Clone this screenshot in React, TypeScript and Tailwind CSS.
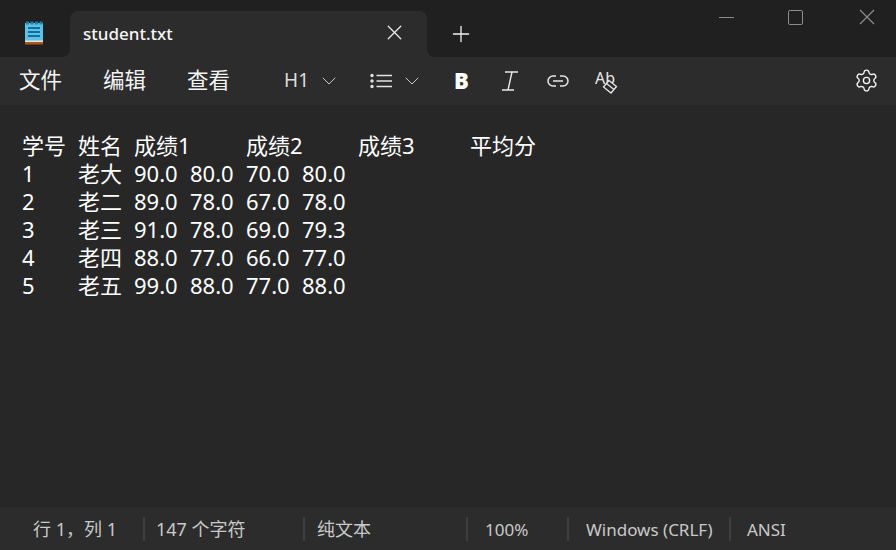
import { ChevronDown, Plus, Settings, X } from "lucide-react";

const fontStack = "font-['Noto_Sans','Noto_Sans_CJK_SC',sans-serif]";
const rows = [
  ["1", "老大", "90.0", "80.0", "70.0", "80.0"],
  ["2", "老二", "89.0", "78.0", "67.0", "78.0"],
  ["3", "老三", "91.0", "78.0", "69.0", "79.3"],
  ["4", "老四", "88.0", "77.0", "66.0", "77.0"],
  ["5", "老五", "99.0", "88.0", "77.0", "88.0"],
];

function NotepadIcon() {
  return (
    <svg width="18" height="24" viewBox="0 0 18 24" className="shrink-0">
      <rect x="0" y="2" width="18" height="19" fill="#5cc3e6" />
      <rect x="0" y="19.5" width="18" height="1.5" fill="#e8e4dc" />
      <rect x="0" y="21" width="18" height="2.5" fill="#b0541c" />
      <rect x="1" y="0.5" width="3" height="3" fill="#1f7fa8" />
      <rect x="5.5" y="0.5" width="3" height="3" fill="#1f7fa8" />
      <rect x="10" y="0.5" width="3" height="3" fill="#1f7fa8" />
      <rect x="14.5" y="0.5" width="3" height="3" fill="#1f7fa8" />
      <rect x="3" y="6" width="12" height="2" fill="#11719c" />
      <rect x="3" y="10" width="12" height="2" fill="#11719c" />
      <rect x="3" y="14" width="12" height="2" fill="#11719c" />
    </svg>
  );
}

function ListIcon() {
  return (
    <svg width="23" height="16" viewBox="0 0 23 16" fill="none" stroke="#e4e4e4" strokeWidth="1.4">
      <circle cx="2" cy="2.5" r="1" fill="#e4e4e4" />
      <circle cx="2" cy="8" r="1" fill="#e4e4e4" />
      <circle cx="2" cy="13.5" r="1" fill="#e4e4e4" />
      <path d="M6.5 2.5H22M6.5 8H22M6.5 13.5H22" />
    </svg>
  );
}

function ItalicIcon() {
  return (
    <svg width="18" height="20" viewBox="0 0 18 20" fill="none" stroke="#e8e8e8" strokeWidth="1.4">
      <path d="M4 1H17M1 19H13M11 1L7 19" />
    </svg>
  );
}

function LinkIcon() {
  return (
    <svg width="22" height="14" viewBox="0 0 22 14" fill="none" stroke="#e8e8e8" strokeWidth="1.5">
      <path d="M9 2H6a5 5 0 0 0 0 10h3M13 2h3a5 5 0 0 1 0 10h-3M6 7h10" />
    </svg>
  );
}

function ClearFormatIcon() {
  return (
    <svg width="24" height="30" viewBox="0 -6 24 30" fill="none" className="block">
      <text x="0" y="12" fontSize="16" fill="#e8e8e8" fontFamily="Noto Sans, sans-serif">Ab</text>
      <path d="M14 8.5L21.5 14.5L16 21L8.5 15Z M11.5 11.5L19 17.5" stroke="#e8e8e8" strokeWidth="1.3" fill="#2c2c2c" />
    </svg>
  );
}

function StatusCell({ width, pad, textSize, text }: { width: string; pad: string; textSize: string; text: string }) {
  return (
    <div className={`flex h-full items-center ${width}`}>
      <div className={`h-[24px] w-[2px] bg-[#3e3e3e] ${pad}`} />
      <span className={`mt-[2px] whitespace-nowrap ${textSize}`}>{text}</span>
    </div>
  );
}

function Row({ cells }: { cells: string[] }) {
  return (
    <div className="grid h-[28px] grid-cols-[repeat(10,56px)] items-center">
      {cells.map((cell, i) => (
        <span key={i} className="whitespace-nowrap">
          {cell}
        </span>
      ))}
    </div>
  );
}

export default function App() {
  return (
    <div className={`flex h-[550px] w-[896px] flex-col overflow-hidden bg-[#272727] text-white ${fontStack}`}>
      <header className="flex h-[57px] shrink-0 bg-[#2c2c2c]">
        <div className="flex w-[70px] items-center rounded-br-lg bg-[#202020] pl-[25px] pt-[9px]">
          <NotepadIcon />
        </div>
        <div className="bg-[#202020] pt-[11px]">
          <div className="flex h-[46px] w-[357px] items-center rounded-t-lg bg-[#2c2c2c] pl-[13px]">
            <span className="text-[17px] font-medium text-[#f6f6f6]">student.txt</span>
            <X className="ml-auto mb-[3px] mr-[20px] text-[#ededed]" size={25} strokeWidth={1.2} />
          </div>
        </div>
        <div className="relative flex flex-1 rounded-bl-lg bg-[#202020]">
          <Plus className="ml-[21px] mt-[21px] text-[#f2f2f2]" size={26} strokeWidth={1.2} />
          <div className="ml-auto flex h-[36px] text-[#8c8c8c]">
            <div className="mr-[54px] mt-[17px] h-[1px] w-[15px] bg-[#8c8c8c]" />
            <div className="mr-[56px] mt-[10px] h-[15px] w-[15px] rounded-[2px] border-[1.5px] border-[#8c8c8c]" />
            <svg width="16" height="16" viewBox="0 0 16 16" stroke="#8c8c8c" strokeWidth="1.2" className="mr-[21px] mt-[9px]">
              <path d="M1 1L15 15M15 1L1 15" />
            </svg>
          </div>
        </div>
      </header>

      <nav className="flex h-[48px] shrink-0 items-center bg-[#2c2c2c] pb-[1px]">
        <span className="ml-[19px] text-[21.5px] text-[#f4f4f4]">文件</span>
        <span className="ml-[41px] text-[21.5px] text-[#f4f4f4]">编辑</span>
        <span className="ml-[41px] text-[21.5px] text-[#f4f4f4]">查看</span>
        <span className="ml-[54px] text-[19px] text-[#dcdcdc]">H1</span>
        <ChevronDown className="ml-[8px] text-[#c8c8c8]" size={24} strokeWidth={1} />
        <div className="ml-[29px]">
          <ListIcon />
        </div>
        <ChevronDown className="ml-[7px] text-[#c8c8c8]" size={24} strokeWidth={1} />
        <span className="ml-[30px] text-[22px] font-black text-white">B</span>
        <div className="ml-[32px]">
          <ItalicIcon />
        </div>
        <div className="ml-[28px]">
          <LinkIcon />
        </div>
        <div className="ml-[26px]">
          <ClearFormatIcon />
        </div>
        <Settings className="ml-auto mr-[17px] text-[#f4f4f4]" size={25} strokeWidth={1.3} />
      </nav>

      <main className="flex-1 pl-[22px] pt-[24px] text-[22px]">
        <div className="grid h-[28px] grid-cols-[repeat(10,56px)] items-center">
          <span>学号</span>
          <span>姓名</span>
          <span className="col-span-2">成绩1</span>
          <span className="col-span-2">成绩2</span>
          <span className="col-span-2">成绩3</span>
          <span className="col-span-2">平均分</span>
        </div>
        {rows.map((row) => (
          <Row key={row[0]} cells={row} />
        ))}
      </main>

      <footer className="flex h-[44px] shrink-0 items-center border-t border-[#232323] bg-[#2c2c2c] text-[#c9c9c9]">
        <div className="flex h-full w-[143px] items-center pl-[33px]">
          <span className="mt-[2px] whitespace-nowrap text-[18px]">行 1，列 1</span>
        </div>
        <StatusCell width="w-[160px]" pad="mr-[11px]" textSize="text-[18px]" text="147 个字符" />
        <StatusCell width="w-[163px]" pad="mr-[12px]" textSize="text-[18px]" text="纯文本" />
        <StatusCell width="w-[101px]" pad="mr-[17px]" textSize="text-[17px]" text="100%" />
        <StatusCell width="w-[162px]" pad="mr-[17px]" textSize="text-[17px]" text="Windows (CRLF)" />
        <StatusCell width="w-[167px]" pad="mr-[16px]" textSize="text-[17px]" text="ANSI" />
      </footer>
    </div>
  );
}
